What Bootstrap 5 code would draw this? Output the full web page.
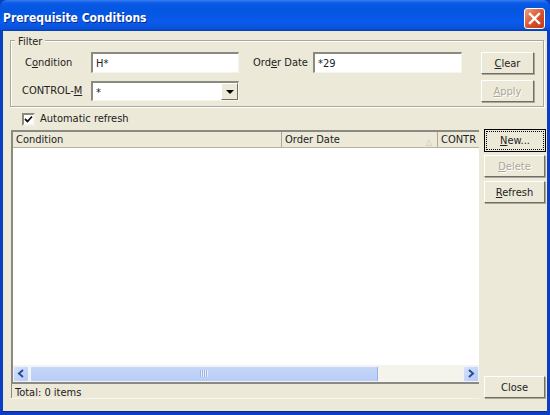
<!DOCTYPE html>
<html lang="en">
<head>
    <meta charset="UTF-8">
    <title>Prerequisite Conditions</title>
    <link href="https://cdn.jsdelivr.net/npm/bootstrap@5.3.0/dist/css/bootstrap.min.css" rel="stylesheet">
    <style>
        html, body { margin: 0; height: 415px; overflow: hidden; background: #0a3fc4; }
        body, .dlg-window { font-family: "DejaVu Sans Condensed", "Liberation Sans", Arial, sans-serif; font-size: 11px; color: #222; }
        .dlg-window {
            width: 550px; height: 415px;
            background: #0a3fc4;
            border-radius: 7px 7px 0 0;
            padding: 0 3px;
            overflow: hidden;
        }
        .dlg-title {
            height: 31px; margin: 0 -3px; padding: 8px 5px 0 3px;
            background: linear-gradient(#3a7cf0 0, #0a5ce8 3px, #0455e0 10px, #0a5bec 22px, #0a50d8 29px, #003cb0 31px);
        }
        .dlg-title-text { font-size: 12px; line-height: 20px; font-weight: 700; color: #fff; text-shadow: 1px 1px 0 #0a2a8c; }
        .dlg-x {
            width: 21px; height: 21px; border: 1px solid #fff; border-radius: 3px;
            background: linear-gradient(135deg, #f0a080, #d8502a 55%, #c23a18);
        }
        .dlg-body { background: #ece9d8; height: 380px; padding: 9px 3px 0 7px; box-shadow: 0 1px 0 #0c2a80; }
        .filter-box {
            position: relative; height: 67px;
            border: 1px solid #aca899; box-shadow: inset 1px 1px 0 #fff, 1px 1px 0 #fff;
            padding: 11px 9px 0 0;
        }
        .filter-legend { position: absolute; left: 4px; top: -6px; background: #ece9d8; padding: 0 3px; line-height: 13px; }
        .f-label { width: 80px; padding: 1px 0 0 14px; white-space: nowrap; }
        .f-label.ctrl { padding: 0 0 0 11px; margin-top: 8px; }
        .f-label2 { padding: 1px 6px 0 14px; white-space: nowrap; width: 74px; }
        .f-input {
            width: 148px; height: 21px; background: #fff; padding: 2px 0 0 3px; line-height: 15px;
            border-top: 2px solid #8b8a80; border-left: 2px solid #8b8a80; border-right: 1px solid #f7f5ea; border-bottom: 1px solid #f7f5ea;
        }
        .f-input.wide { width: 149px; }
        .f-input.drop { height: 20px; margin-top: 8px; }
        .f-arrow {
            position: absolute; right: 0; top: 0; width: 17px; height: 17px; background: #ece9d8;
            border: 1px solid; border-color: #fff #716f64 #716f64 #fff;
        }
        .f-arrow::after {
            content: ""; position: absolute; left: 4px; top: 6px;
            border-left: 4px solid transparent; border-right: 4px solid transparent; border-top: 4px solid #000;
        }
        .w-btn {
            background: #ece9d8; color: #222; text-align: center; line-height: 21px;
            border: 1px solid; border-color: #fff #716f64 #716f64 #fff;
            box-shadow: 1px 1px 0 #aca899;
        }
        .w-btn.off { color: #aca899; text-shadow: 1px 1px 0 #fff; }
        .w-btn.def { border-color: #000; box-shadow: none; height: 23px; width: 62px; margin-bottom: 3px; padding: 1px; }
        .top-col { gap: 6px; }
        .top-btn { width: 53px; height: 22px; }
        .side-btn { width: 61px; height: 22px; }
        .focus-dots { display: block; height: 19px; line-height: 17px; border: 1px dotted #000; }
        .auto-row { height: 23px; padding: 2px 0 0 12px; }
        .w-check {
            width: 13px; height: 13px; background: #fff; margin-right: 5px;
            border: 2px solid; border-color: #8b8a80 #f4f2e8 #f4f2e8 #8b8a80;
        }
        .w-check svg { display: block; }
        .main-row { height: 268px; }
        .list-col { width: 468px; margin-left: 1px; }
        .list-pane {
            height: 235px; background: #fff;
            border-top: 2px solid #8b8a80; border-left: 2px solid #8b8a80;
        }
        .list-head { height: 16px; background: #ece9d8; line-height: 16px; border-bottom: 1px solid #b5b2a0; }
        .list-head > div { padding-left: 3px; border-right: 1px solid #aca899; position: relative; overflow: hidden; white-space: nowrap; }
        .hc-cond { width: 269px; }
        .hc-date { width: 156px; }
        .hc-ctrl { width: 41px; border-right: 0 !important; }
        .sort-mark { position: absolute; right: 5px; top: 2px; color: #c8c5b4; font-size: 9px; }
        .h-scroll { height: 17px; background: #f5f4ec; border-left: 2px solid #8b8a80; }
        .sb-btn { width: 16px; height: 16px; border-radius: 2px; background: linear-gradient(135deg, #d6e2fb, #b4c9f4); border: 1px solid #eef3fd; }
        .sb-thumb {
            width: 348px; height: 16px; margin-left: 1px; border-radius: 2px;
            background: linear-gradient(#c6d6f9, #b8cdf7); border: 1px solid #eef3fd; border-right-color: #9ab2e2;
        }
        .grip { width: 8px; height: 7px; background: repeating-linear-gradient(90deg, #9fb5e6 0 1px, #e6edfc 1px 2px); }
        .status-bar {
            height: 16px; line-height: 17px; padding-left: 3px;
            border-top: 2px solid #8b8a80; border-left: 1px solid #8b8a80; box-shadow: 0 1px 0 #f7f6ee;
        }
        .side-col { width: 62px; margin-left: 5px; margin-top: -1px; }
    </style>
</head>
<body>
    <div class="dlg-window">
        <div class="dlg-title d-flex justify-content-between align-items-start">
            <span class="dlg-title-text">Prerequisite Conditions</span>
            <div class="dlg-x d-flex align-items-center justify-content-center">
                <svg width="13" height="13" viewBox="0 0 13 13"><path d="M2 2 L11 11 M11 2 L2 11" stroke="#fff" stroke-width="2.4" stroke-linecap="square"/></svg>
            </div>
        </div>
        <div class="dlg-body">
            <div class="filter-box d-flex">
                <div class="filter-legend">Filter</div>
                <div class="flex-grow-1">
                    <div class="d-flex align-items-center">
                        <div class="f-label">C<u>o</u>ndition</div>
                        <div class="f-input">H*</div>
                        <div class="f-label2">Ord<u>e</u>r Date</div>
                        <div class="f-input wide">*29</div>
                    </div>
                    <div class="d-flex align-items-center">
                        <div class="f-label ctrl">CONTROL-<u>M</u></div>
                        <div class="f-input drop position-relative">*<div class="f-arrow"></div></div>
                    </div>
                </div>
                <div class="d-flex flex-column top-col">
                    <div class="w-btn top-btn"><u>C</u>lear</div>
                    <div class="w-btn top-btn off"><u>A</u>pply</div>
                </div>
            </div>
            <div class="auto-row d-flex align-items-center">
                <div class="w-check"><svg width="9" height="9" viewBox="0 0 9 9"><path d="M1 4 L3.5 6.5 L8 1.5" fill="none" stroke="#111" stroke-width="1.8"/></svg></div>
                Automatic refresh
            </div>
            <div class="main-row d-flex">
                <div class="list-col">
                    <div class="list-pane">
                        <div class="list-head d-flex">
                            <div class="hc-cond">Condition</div>
                            <div class="hc-date">Order Date<span class="sort-mark">&#9651;</span></div>
                            <div class="hc-ctrl">CONTR</div>
                        </div>
                    </div>
                    <div class="h-scroll d-flex align-items-center">
                        <div class="sb-btn d-flex align-items-center justify-content-center">
                            <svg width="8" height="9" viewBox="0 0 8 9"><path d="M6 1 L2 4.5 L6 8" fill="none" stroke="#2c4a9c" stroke-width="2"/></svg>
                        </div>
                        <div class="sb-thumb d-flex align-items-center justify-content-center"><div class="grip"></div></div>
                        <div class="flex-grow-1"></div>
                        <div class="sb-btn d-flex align-items-center justify-content-center">
                            <svg width="8" height="9" viewBox="0 0 8 9"><path d="M2 1 L6 4.5 L2 8" fill="none" stroke="#2c4a9c" stroke-width="2"/></svg>
                        </div>
                    </div>
                    <div class="status-bar">Total: 0 items</div>
                </div>
                <div class="side-col d-flex flex-column">
                    <div class="w-btn def"><span class="focus-dots"><u>N</u>ew...</span></div>
                    <div class="w-btn side-btn off mb-1"><u>D</u>elete</div>
                    <div class="w-btn side-btn"><u>R</u>efresh</div>
                    <div class="w-btn side-btn mt-auto">Close</div>
                </div>
            </div>
        </div>
    </div>
    <script src="https://cdn.jsdelivr.net/npm/bootstrap@5.3.0/dist/js/bootstrap.bundle.min.js"></script>
</body>
</html>
